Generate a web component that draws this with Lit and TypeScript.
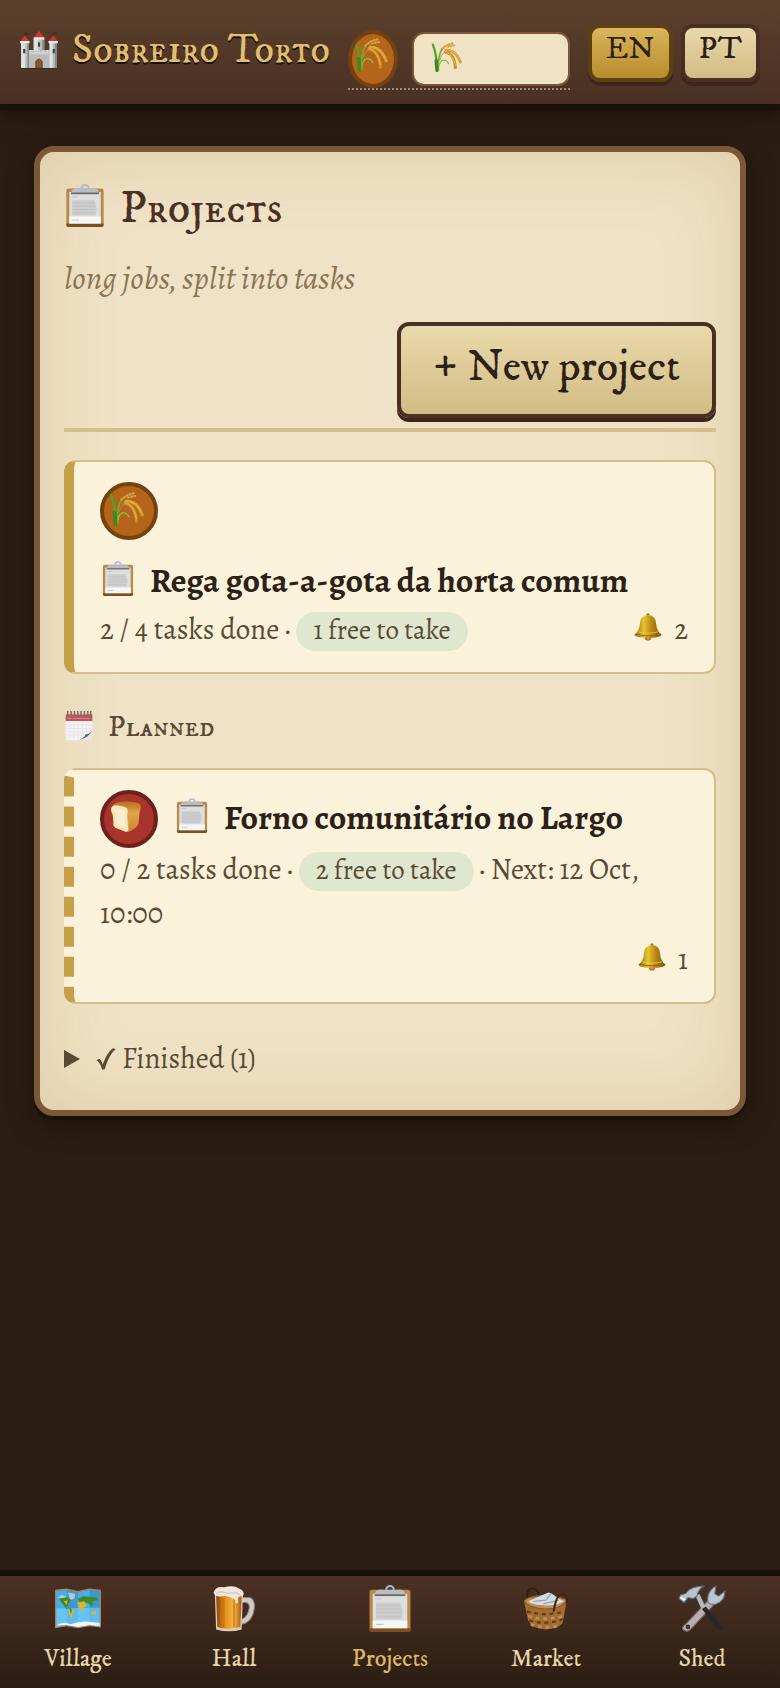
import { LitElement, html, css, svg, nothing } from "lit";
import type { SVGTemplateResult } from "lit";
import { customElement, property, state } from "lit/decorators.js";
import { classMap } from "lit/directives/class-map.js";

const rice = svg`
  <g fill="none" stroke-linecap="round">
    <path d="M6 34Q6 16 1 3" stroke="#4fa32a" stroke-width="2.6"/>
    <path d="M7 34Q7 18 12 8" stroke="#5cb52e" stroke-width="1.8"/>
    <path d="M8 34Q8 24 13 22Q17 21 20 26" stroke="#8cc63f" stroke-width="1.4"/>
    <path d="M6 34L5 22" stroke="#3a8a1c" stroke-width="4"/>
    <path d="M8 20Q10 4 25 3" stroke="#9a9a3a" stroke-width="1"/>
    <path d="M9 22Q14 6 26 12" stroke="#9a9a3a" stroke-width="1"/>
    <path d="M12 8Q18 2 27 1M19 6L28 4" stroke="#d8a240" stroke-width="2" stroke-dasharray="1.2 2.2"/>
    <path d="M17 10Q28 9 34 24" stroke="#d99c2c" stroke-width="3.6" stroke-dasharray="1.2 2.6"/>
    <path d="M16 12Q27 14 28 31" stroke="#cc8a20" stroke-width="3.8" stroke-dasharray="1.2 2.6"/>
    <path d="M17 9Q27 9 33 21M16 11Q25 14 28 28" stroke="#e0ac48" stroke-width="1.6"/>
  </g>`;

const bread = svg`
  <defs><linearGradient id="crust" x1="0" y1="0" x2="0" y2="1"><stop offset="0" stop-color="#b56e22"/><stop offset=".4" stop-color="#e3a549"/><stop offset="1" stop-color="#c98332"/></linearGradient></defs>
  <path d="M2 8Q3 2 11 1Q22-1 31 2Q36 4 34 10Q33 13 33 16L32 26Q31 30 21 35L8 31Q2 28 4 24Z" fill="url(#crust)"/>
  <path d="M1 9Q2 4 9 5Q17 6 20 9Q21 12 20 16L21 32Q20 36 16 34L6 30Q3 28 4 24L3 15Q1 12 1 9Z" fill="#f5e6bd"/>
  <path d="M5 9Q13 9 17 12L17 29Q11 29 7 26Z" fill="#fbf2d6" opacity=".7"/>
  <path d="M20 9Q21 12 20 16L21 32" fill="none" stroke="#d79c4b" stroke-width="1"/>`;

const clipboard = svg`
  <rect x="2" y="3" width="32" height="33" rx="2" fill="#b98a47"/>
  <path d="M2 33h32v1q0 2-2 2H4q-2 0-2-2Z" fill="#7c4f1e"/>
  <rect x="4.500" y="6" width="27" height="27" fill="#dedede"/>
  <path d="M4.500 27h27v6h-27Z" fill="#f6f6f6"/>
  <path d="M7 10h5M7 30h6" stroke="#c6c6c6" stroke-width="1"/>
  <path d="M7 13h19l1 3 1 4-1 6H7Z" fill="#cdcdcd"/>
  <g stroke="#c2c2c2" stroke-width=".8"><path d="M7 15h19M7 18h20M7 21h20M7 24h19"/></g>
  <path d="M15 3a3 3 0 0 1 6 0" fill="none" stroke="#a9bed2" stroke-width="1.600"/>
  <path d="M7 4Q9 2 13 3h10q4-1 6 1l1 3H6Z" fill="#b9bcc2"/>
  <path d="M6 6.500h24v1.400H6Z" fill="#6d655f"/>`;

const bell = svg`
  <defs><linearGradient id="bell" x1="0" x2="1"><stop offset="0" stop-color="#8f6a08"/><stop offset=".35" stop-color="#e8c52c"/><stop offset=".6" stop-color="#c08c18"/><stop offset="1" stop-color="#7d5606"/></linearGradient></defs>
  <circle cx="18" cy="2.500" r="2.200" fill="#a87c14"/>
  <circle cx="18" cy="31.500" r="4" fill="#a05a14"/>
  <path d="M18 2.500Q28 3 28.500 14Q29 23 35.500 28Q35 32 18 32Q1 32 .500 28Q7 23 7.500 14Q8 3 18 2.500Z" fill="url(#bell)"/>
  <path d="M2 27Q18 32 34 27" fill="none" stroke="#8a5f0a" stroke-width="1.200"/>
  <path d="M5 24Q18 28 31 24" fill="none" stroke="#e8c84a" stroke-width="1"/>
  <circle cx="18" cy="32" r="2.400" fill="#e0902c"/>`;

const calendar = svg`
  <path d="M2 4h32v20L18 35H2Z" fill="#f4f4f4"/>
  <g stroke="#e0e0e0" stroke-width=".8"><path d="M2 17h32M2 21h31M2 25h28M2 29h22M7 13v22M12 13v22M17 13v22M22 13v18M27 13v15"/></g>
  <path d="M34 24v11H18Q24 33 26 29Q30 29 34 24Z" fill="#e6e6e6"/>
  <path d="M18 35Q24 33 26 28Q31 28 34 23Q31 31 18 35Z" fill="#5b5b5b"/>
  <path d="M2 4h32v8H2Z" fill="#c0565a"/>
  <path d="M4 9h5M11 9h20" stroke="#d58a8c" stroke-width="1"/>
  <g stroke="#6f6f74" stroke-width="1.800"><path d="M4.500 0v6M8.500 0v6M12.500 0v6M16.500 0v6M20.500 0v6M24.500 0v6M28.500 0v6M32 0v6"/></g>`;

const castle = svg`
  <path d="M1 9h7v9h5V7h10v11h5V9h7v27H1Z" fill="#b9bcb9"/>
  <path d="M1 9h4v27H1ZM13 7h4v12h-4ZM28 9h3v27h-3Z" fill="#dfe1de"/>
  <path d="M7 10h1.500v26H7ZM21 8h2v11h-2ZM33 9h2v27h-2Z" fill="#868b8a"/>
  <path d="M9 18h2v2h2v-2h2v2h2v-2h2v2h2v-2h2v2h2v-2h2v4H9Z" fill="#cfd1ce"/>
  <path d="M13 6L18 0L23 6ZM0 10L4.500 4L9 10ZM27 10L31.500 4L36 10Z" fill="#d6342c"/>
  <path d="M5 5V1l4 2-4 1M31 5V1l4 1-4 2" fill="#7d1f1b" stroke="#3a2a28" stroke-width=".6"/>
  <path d="M0 9.500h9v2H0ZM27 9.500h9v2h-9ZM13 6h10v2H13Z" fill="#eceeec"/>
  <path d="M15 36v-7q3-5 6 0v7Z" fill="#8a5527" stroke="#5d3a1c" stroke-width=".8"/>
  <path d="M3 17h2v4H3ZM31 17h2v4h-2ZM17 11h2v4h-2Z" fill="#3c3f40"/>
  <path d="M1 35.500h34" stroke="#2f2b28" stroke-width="1"/>`;

const map = svg`
  <path d="M0 3L9 2L18 4L27 2L36 3L36 32.500L27 31.500L18 33L9 31.500L0 33Z" fill="#b08058"/>
  <path d="M1 4L9 3L18 5L27 3L35 4L35 31.500L27 30.500L18 32L9 30.500L1 32Z" fill="#46aee6"/>
  <path d="M9 3L18 5V32L9 30.500ZM27 3L35 4L35 31.500L27 30.500Z" fill="#3289c2" opacity=".55"/>
  <path d="M1 17.500L35 17V31.500L27 30.500L18 32L9 30.500L1 32Z" fill="#7cd0fa" opacity=".6"/>
  <path d="M10 5l6 1-1 4-3 1ZM2 9l3-2 4 1-2 2Z" fill="#b9c6cc"/>
  <path d="M3 10l6-1 4 2-2 2-2 4 2 1-2 0-3-4ZM18 10l4-2 11 1 1 2-4 1-2 3-3-2-2 1-4-1Z" fill="#3f8a28"/>
  <path d="M7 12l3-1-1 4ZM11 18l4 1-2 6-2-3ZM17 13l6-1 2 3-3 2-1 4-3-6ZM29 20l3-1v3l-4 0Z" fill="#e2b42c"/>
  <path d="M11 16l2 2 0 3-1 0ZM26 13l4 0-1 3Z" fill="#3d8f29"/>
  <path d="M1 31Q7 27 12 30Q20 27 27 28L35 29V31.500L27 30.500L18 32L9 30.500Z" fill="#eef6fa"/>`;

const mug = svg`
  <defs><linearGradient id="beer" x1="0" x2="1"><stop offset="0" stop-color="#8f4308"/><stop offset=".35" stop-color="#e58f18"/><stop offset=".7" stop-color="#f3b849"/><stop offset="1" stop-color="#a8560c"/></linearGradient></defs>
  <path d="M24 9h5q5 0 5 7q-1 12-10 14v-4q5-2 6-9q0-4-3-4h-3Z" fill="#cfcac4" stroke="#8d867e" stroke-width=".8"/>
  <path d="M3 6H25L24 34Q14 37 4 34Z" fill="#d9cdbd"/>
  <path d="M4 7H24L23 32Q14 35 5 32Z" fill="url(#beer)"/>
  <path d="M10 10v22M18 10v22" stroke="#c57512" stroke-width="1"/>
  <path d="M2 5Q4 0 10 1Q18-1 22 2Q27 4 25 8Q22 8 21 9v4q-2 2-2-2Q13 7 9 8Q3 9 2 5Z" fill="#f0e8e0"/>
  <path d="M4 6q4-3 9 0 6-2 10 1" fill="none" stroke="#d5c9bb" stroke-width="1"/>`;

const basket = svg`
  <path d="M4 13Q2 3 6 2Q11 1 13 8" fill="none" stroke="#2e1e12" stroke-width="1.400"/>
  <path d="M1 13Q2 7 18 7Q34 8 34 13L31 29Q27 34 17 34Q7 33 4 27Z" fill="#a06c34"/>
  <g stroke="#5f3816" stroke-width="1.600" stroke-dasharray="3 3"><path d="M3 20Q17 24 32 20M5 27Q17 31 31 26" fill="none"/></g>
  <g stroke="#c28d4e" stroke-width="2.200" stroke-dasharray="3 3" fill="none"><path d="M4 23.500Q17 27.500 32 23.500M6 30Q17 34 28 31"/></g>
  <path d="M1 12Q2 8 18 8Q34 9 34 12Q30 18 17 18Q4 17 1 12Z" fill="#c58d4c" stroke="#8a5727" stroke-width=".8"/>
  <path d="M4 12L13 8L20 5Q24 6 26 9L32 12Q26 16 16 15Q7 15 4 12Z" fill="#d3dde6"/>
  <path d="M8 12l10-1 4-5M16 14l12-3" stroke="#94a3b3" stroke-width="1" fill="none"/>
  <path d="M24 20Q26 6 31 6Q36 7 34 14" fill="none" stroke="#3b2616" stroke-width="1.600"/>`;

const tools = svg`
  <path d="M5 30L24 10L28 14L9 34Q6 37 3 34Q2 32 5 30Z" fill="#b9adb0" stroke="#6c6467" stroke-width=".8"/>
  <circle cx="7" cy="32" r="1.800" fill="#4a3025"/>
  <path d="M23 13Q21 7 26 2L29 0L28 6L31 8L36 4Q36 12 29 14Q25 15 23 13Z" fill="#b9c6d0" stroke="#64717c" stroke-width=".8"/>
  <path d="M13 8L16 6L21 17L18 19Z" fill="#aebbc6"/>
  <path d="M18 18L21 16L34 32Q34 35 31 35Z" fill="#25272a"/>
  <path d="M5 6Q9 0 20 0Q15 2 14 8L11 10L7 9L4 13L0 10L1 7Z" fill="#b5c3cf" stroke="#5d6a75" stroke-width=".8"/>
  <path d="M1 9l4 2" stroke="#f4f8fb" stroke-width="1.400"/>`;

const check = svg`<path d="M1 20Q6 16 8 20Q10 24 11 27Q18 8 27 1Q31 0 32 2Q22 9 14 35L10 35Q7 24 1 20Z" fill="currentColor"/>`;
const triangle = svg`<path d="M0 0L32 18L0 36Z" fill="currentColor"/>`;

const ICONS: Record<string, SVGTemplateResult> = {
  rice, bread, clipboard, bell, calendar, castle, map, mug, basket, tools, check, triangle,
};

const icon = (name: string) => html`
  <svg class="icon ${name}" viewBox="0 0 36 36" aria-hidden="true">${ICONS[name]}</svg>
`;

const iconStyles = css`
  * { box-sizing: border-box; }
  .icon { display: block; flex: none; overflow: visible; }
`;

interface Project {
  emblem: "rice" | "bread";
  title: string;
  done: number;
  total: number;
  free: number;
  next?: string;
  followers: number;
  planned?: boolean;
}

@customElement("house-emblem")
class HouseEmblem extends LitElement {
  @property() kind = "rice";

  static styles = [iconStyles, css`
    :host { display: block; flex: none; width: 58px; height: 58px; }
    .disc {
      width: 100%; height: 100%; padding: 6px; border-radius: 50%;
      border: 4px solid #74420f; background: #b4641b; overflow: hidden;
    }
    .disc.bread { border-color: #6b211d; background: #a8342b; }
    .icon { width: 34px; height: 34px; }
    .icon.bread { width: 32px; height: 34px; }
    :host([narrow]) { width: 50px; }
    :host([narrow]) .disc { padding: 4px 2px; }
  `];

  render() {
    return html`<div class="disc ${this.kind}">${icon(this.kind)}</div>`;
  }
}

@customElement("project-card")
class ProjectCard extends LitElement {
  @property({ attribute: false }) project!: Project;

  static styles = [iconStyles, css`
    :host { display: block; }
    .card {
      padding: 20px 26px; border: 2px solid #d5be89; border-left: 10px solid #c6a048;
      border-radius: 12px; background: #fbf2dc; color: #5a4a33;
      font-size: 29px; line-height: 44px;
    }
    .card.planned { border-left-style: dashed; }
    .head { display: flex; flex-wrap: wrap; align-items: center; gap: 16px; }
    .title {
      display: flex; align-items: center; gap: 14px; margin: 0; padding-bottom: 2px;
      font-size: 34px; line-height: 50px; font-weight: 700; color: #2b2117;
    }
    .title .icon { width: 36px; height: 34px; margin-bottom: 4px; }
    .meta { display: flex; flex-wrap: wrap; gap: 2px 16px; }
    .facts { margin: 0; }
    .free { padding: 0 17px 3px; border-radius: 20px; background: #dfe7cf; font-size: 27px; }
    .bell-count { display: flex; align-items: center; gap: 12px; margin-left: auto; }
    .bell-count .icon { width: 28px; height: 28px; margin-bottom: 6px; }
  `];

  render() {
    const p = this.project;
    return html`
      <article class=${classMap({ card: true, planned: !!p.planned })}>
        <div class="head">
          <house-emblem kind=${p.emblem}></house-emblem>
          <h3 class="title">${icon("clipboard")}<span>${p.title}</span></h3>
        </div>
        <div class="meta">
          <p class="facts">
            ${`${p.done} / ${p.total} tasks done ·`}
            <span class="free">${`${p.free} free to take`}</span>
            ${p.next ? `· Next: ${p.next}` : nothing}
          </p>
          <span class="bell-count">${icon("bell")}<span>${p.followers}</span></span>
        </div>
      </article>
    `;
  }
}

@customElement("app-root")
class AppRoot extends LitElement {
  @state() private lang = "EN";
  @state() private tab = "Projects";

  private active: Project = {
    emblem: "rice", title: "Rega gota-a-gota da horta comum",
    done: 2, total: 4, free: 1, followers: 2,
  };
  private planned: Project = {
    emblem: "bread", title: "Forno comunitário no Largo",
    done: 0, total: 2, free: 2, next: "12 Oct, 10:00", followers: 1, planned: true,
  };
  private tabs = [
    ["map", "Village"], ["mug", "Hall"], ["clipboard", "Projects"],
    ["basket", "Market"], ["tools", "Shed"],
  ];

  static styles = [iconStyles, css`
    :host {
      --display: "IM Fell DW Pica", "Liberation Serif", serif;
      --caps: "IM Fell DW Pica SC", "Liberation Serif", serif;
      display: flex; flex-direction: column; min-height: 100vh;
      background: #2b1d13; color: #2b2117;
      font-family: "Alegreya", "Liberation Serif", serif;
    }
    button, input { font: inherit; color: inherit; }

    .top {
      display: flex; align-items: flex-start; gap: 18px; padding: 24px 20px 14px;
      background: linear-gradient(#5b402b, #4a3024);
      box-shadow: 0 6px 0 #1a110a, 0 8px 20px rgba(0, 0, 0, .5);
    }
    .brand {
      display: flex; align-items: center; gap: 14px; flex: none;
      font-family: var(--caps); font-size: 40px; line-height: 54px; color: #e0bf6f;
      text-shadow: 0 2px 0 #1a110a; text-decoration: none;
    }
    .brand .icon { width: 38px; height: 38px; margin-bottom: 2px; }
    .who {
      display: flex; align-items: center; gap: 14px;
      flex: 1; min-width: 0; margin-top: 6px; border-bottom: 2px dotted #a08d78;
    }
    .field { position: relative; flex: 1; min-width: 0; }
    .name {
      display: block; width: 100%; height: 54px; padding: 0 16px 0 56px;
      border: 2px solid #7b5538; border-radius: 12px; background: #f0e2c4;
      font-size: 27px;
    }
    .field .icon { position: absolute; left: 20px; top: 10px; width: 30px; height: 30px; }
    .langs { display: flex; gap: 8px; flex: none; }
    .lang {
      padding: 0 14px 8px; border: 4px solid #4a3024; border-radius: 12px;
      background: linear-gradient(#e9d8ab, #d2bc85); box-shadow: 0 4px 0 #3a261b;
      font-family: var(--display); font-size: 32px; line-height: 42px;
    }
    .lang.on { border-color: #5d4012; background: linear-gradient(#dbb65c, #b78b2c); }

    main { flex: 1; padding: 42px 34px; }
    .panel {
      padding: 24px 24px 28px; border: 6px solid #7b5838; border-radius: 20px;
      background: #f0e2c6;
      box-shadow: 0 4px 0 #1a110a, 0 8px 28px rgba(0, 0, 0, .4), inset 0 0 80px rgba(150, 115, 40, .2);
    }
    .panel-head { padding-bottom: 10px; margin-bottom: 28px; border-bottom: 4px solid #d5be89; }
    .panel-title {
      display: flex; align-items: center; gap: 14px; margin: 0;
      font-family: var(--caps); font-size: 46px; line-height: 66px; font-weight: 400; color: #4a3024;
    }
    .panel-title .icon { width: 42px; height: 42px; margin-bottom: 6px; }
    .lead { margin: 12px 0 20px; font-size: 33px; line-height: 48px; font-style: italic; color: #8a7452; }
    .new {
      display: block; margin-left: auto; padding: 0 32px 4px;
      border: 4px solid #4a3024; border-radius: 12px;
      background: linear-gradient(#ead9ab, #d2bc85); box-shadow: 0 4px 0 #3a261b;
      font-family: var(--display); font-size: 44px; line-height: 84px;
    }
    .section {
      display: flex; align-items: center; gap: 14px; margin: 30px 0 16px;
      font-family: var(--caps); font-size: 30px; line-height: 48px; font-weight: 400; color: #5a4a33;
    }
    .section .icon { width: 30px; height: 30px; margin-bottom: 4px; }
    .finished { margin-top: 32px; color: #5a4a33; }
    .finished summary {
      display: flex; align-items: center; list-style: none; cursor: pointer;
      font-size: 29px; line-height: 46px;
    }
    .finished .triangle { width: 18px; height: 18px; margin-right: 14px; }
    .finished .check { width: 22px; height: 22px; margin-right: 4px; }

    .tabs {
      display: grid; grid-template-columns: repeat(5, 1fr);
      border-top: 6px solid #1a110a; background: linear-gradient(#4c3124, #2b1d13);
    }
    .tab {
      display: flex; flex-direction: column; align-items: center; gap: 10px;
      padding: 10px 0 12px; font-family: var(--display); font-size: 24px; line-height: 34px;
      color: #e8d6a8; text-decoration: none;
    }
    .tab .icon { width: 48px; height: 46px; }
    .tab.on { color: #e0b95f; }
  `];

  render() {
    return html`
      <header class="top">
        <a class="brand" href="#home">${icon("castle")}<span>Sobreiro Torto</span></a>
        <div class="who">
          <house-emblem kind="rice" narrow></house-emblem>
          <div class="field">
            <input class="name" type="text" aria-label="House name" />
            ${icon("rice")}
          </div>
        </div>
        <div class="langs">
          ${["EN", "PT"].map((l) => html`
            <button class=${classMap({ lang: true, on: l === this.lang })}
              aria-pressed=${l === this.lang} @click=${() => (this.lang = l)}>${l}</button>
          `)}
        </div>
      </header>
      <main>
        <section class="panel">
          <div class="panel-head">
            <h1 class="panel-title">${icon("clipboard")}<span>Projects</span></h1>
            <p class="lead">long jobs, split into tasks</p>
            <button class="new">+ New project</button>
          </div>
          <project-card .project=${this.active}></project-card>
          <h2 class="section">${icon("calendar")}<span>Planned</span></h2>
          <project-card .project=${this.planned}></project-card>
          <details class="finished">
            <summary>${icon("triangle")}${icon("check")}<span>Finished (1)</span></summary>
          </details>
        </section>
      </main>
      <nav class="tabs">
        ${this.tabs.map(([name, label]) => html`
          <a class=${classMap({ tab: true, on: label === this.tab })} href="#${label.toLowerCase()}"
            @click=${() => (this.tab = label)}>${icon(name)}<span>${label}</span></a>
        `)}
      </nav>
    `;
  }
}
